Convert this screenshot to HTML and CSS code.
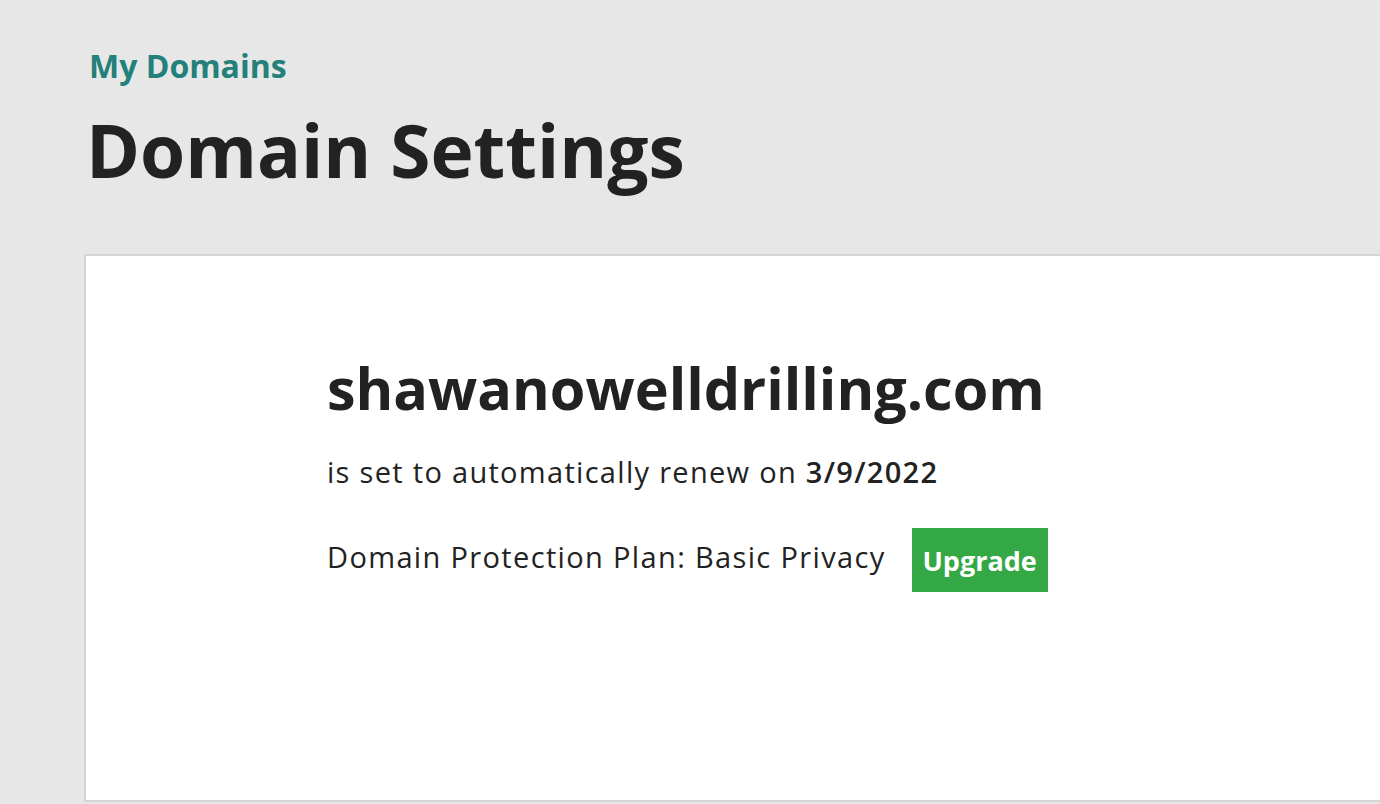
FILE: index.html
```html
<!DOCTYPE html>
<html lang="en">
<head>
  <meta charset="UTF-8">
  <title>Domain Settings</title>
  <link rel="stylesheet" href="styles.css">
</head>
<body>

<header class="page-head">
  <a class="crumb" href="#">My Domains</a>
  <h1>Domain Settings</h1>
</header>

<section class="panel">
  <div class="summary">
    <h2>shawanowelldrilling.com</h2>
    <p class="renew">is set to automatically renew on <b>3/9/2022</b></p>
    <div class="plan">
      <span>Domain Protection Plan: Basic Privacy</span>
      <button class="upgrade">Upgrade</button>
    </div>
  </div>
</section>

</body>
</html>
```

FILE: styles.css
```css
body { margin: 0; background: #e7e7e7; font-family: "Open Sans", sans-serif; color: #222; overflow: hidden; }
.page-head { padding: 46px 0 0 89px; }
.crumb { color: #23807a; font-weight: 700; font-size: 32px; text-decoration: none; display: block; line-height: 40px; }
.page-head h1 { margin: 24px 0 0 -3px; font-size: 73px; font-weight: 700; line-height: 80px; }
.panel { margin: 64px 0 0 84px; height: 544px; background: #fff; border: 2px solid #d4d4d4; border-right: none; }
.summary { padding: 97px 0 0 241px; }
.summary h2 { margin: 0; font-size: 57.5px; font-weight: 700; line-height: 70px; }
.renew { margin: 29px 0 0; font-size: 29px; line-height: 40px; letter-spacing: 1.3px; }
.renew b { font-weight: 600; }
.plan { display: flex; align-items: flex-start; gap: 26px; margin-top: 36px; font-size: 29px; letter-spacing: 1.35px; }
.plan span { margin-top: 9px; line-height: 40px; }
.upgrade { background: #33a845; color: #fff; border: none; font-family: inherit; font-weight: 700; font-size: 27px; letter-spacing: 0; width: 136px; height: 64px; padding: 0; }
```
